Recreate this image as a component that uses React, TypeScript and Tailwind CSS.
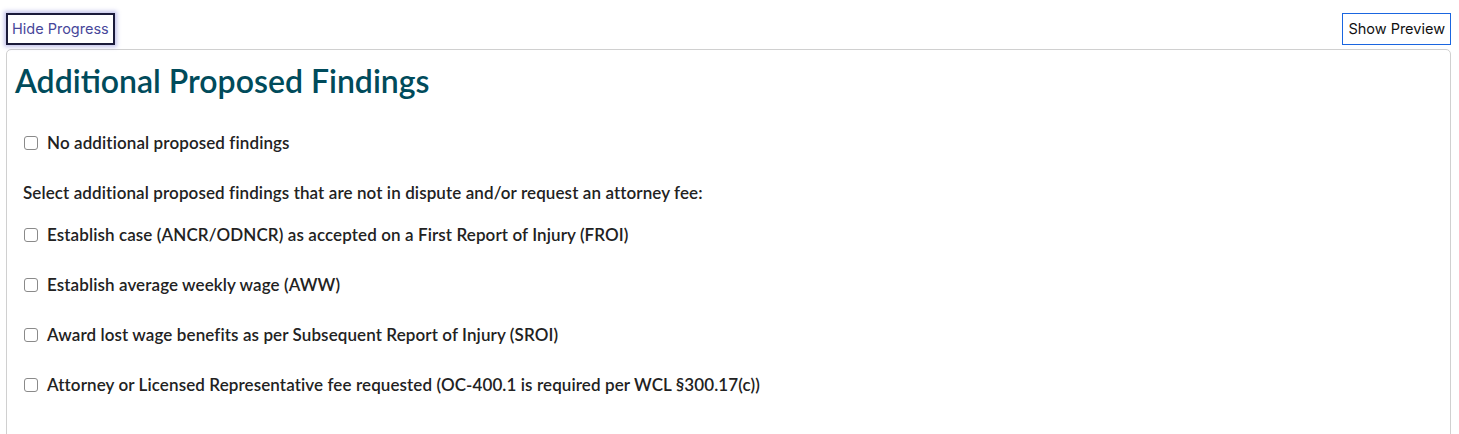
import React from 'react'

const findings = [
    'Establish case (ANCR/ODNCR) as accepted on a First Report of Injury (FROI)',
    'Establish average weekly wage (AWW)',
    'Award lost wage benefits as per Subsequent Report of Injury (SROI)',
    'Attorney or Licensed Representative fee requested (OC-400.1 is required per WCL §300.17(c))',
]

function CheckRow({ label }: { label: string }) {
    return (
        <label className="flex items-center h-[24px]">
            <span className="w-[14px] h-[14px] ml-[9px] mr-[9px] rounded-[3px] border border-[#8a8a8a] bg-white shrink-0" />
            <span className="text-[17px] tracking-[0.1px] font-semibold text-[#222]">{label}</span>
        </label>
    )
}

export default function App() {
    return (
        <div className="bg-white min-h-[434px] font-['Lato','Liberation_Sans',sans-serif]">
            {/* top buttons */}
            <div className="flex justify-between items-start pl-[6px] pr-[8px] pt-[13px]">
                <button className="h-[32px] px-[4px] border-2 border-[#1b1b3a] shadow-[0_0_4px_2px_rgba(90,90,200,0.35)] text-[14.5px] text-[#47479a] bg-white font-['Inter',sans-serif]">
                    Hide Progress
                </button>
                <button className="h-[32px] px-[5px] border border-[#1a66e0] text-[14.5px] text-[#111] bg-white font-['Inter',sans-serif]">
                    Show Preview
                </button>
            </div>

            {/* card */}
            <div className="ml-[6px] mr-[8px] mt-[4px] h-[400px] border border-[#d0d0d0] rounded-[5px] pl-[8px]">
                <h1 className="text-[32px] font-semibold text-[#004b5b] mt-[12px] leading-[38px]">
                    Additional Proposed Findings
                </h1>
                <div className="mt-[31px]">
                    <CheckRow label="No additional proposed findings" />
                </div>
                <p className="mt-[26px] ml-[8px] text-[17px] tracking-[0.1px] font-semibold text-[#222] leading-[24px]">
                    Select additional proposed findings that are not in dispute and/or request an attorney fee:
                </p>
                <div className="mt-[18px] flex flex-col gap-[26px]">
                    {findings.map((f, i) => (
                        <CheckRow key={i} label={f} />
                    ))}
                </div>
            </div>
        </div>
    )
}
